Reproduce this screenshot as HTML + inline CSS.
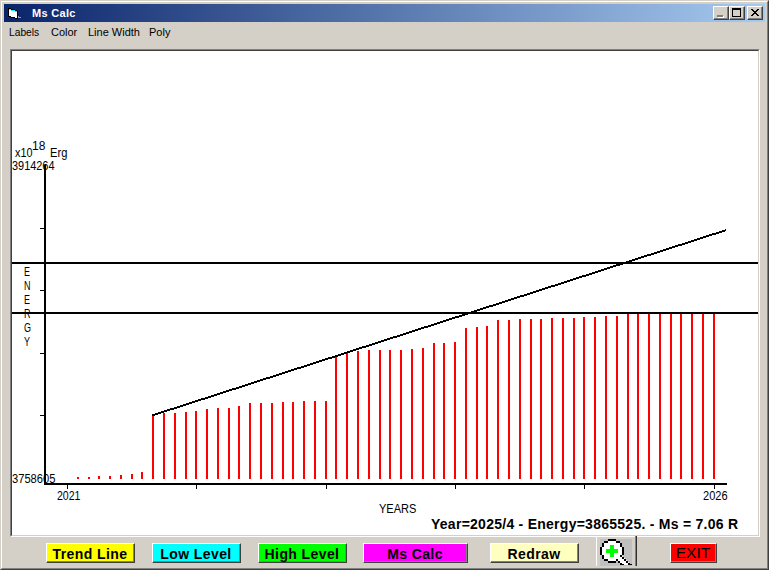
<!DOCTYPE html>
<html><head><meta charset="utf-8">
<style>
*{margin:0;padding:0;box-sizing:border-box}
html,body{width:769px;height:570px;overflow:hidden;background:#d4d0c8}
body{position:relative;font-family:"Liberation Sans",sans-serif;}
.a{position:absolute}
.t{position:absolute;white-space:nowrap;line-height:1;transform-origin:0 0}
.btn{position:absolute;border-top:1px solid #fff;border-left:1px solid #fff;border-right:1px solid #404040;border-bottom:1px solid #404040;}
.btn i{position:absolute;left:0;top:0;right:0;bottom:0;border-right:1px solid #808080;border-bottom:1px solid #808080;}
.btn b{position:absolute;left:-1px;right:0;text-align:center;font-weight:bold;font-size:14px;letter-spacing:0.4px;color:#000;white-space:nowrap}
.tb{position:absolute;top:6px;width:16px;height:14px;background:#d4d0c8;border-top:1px solid #fff;border-left:1px solid #fff;border-right:1px solid #404040;border-bottom:1px solid #404040;}
.tb i{position:absolute;left:0;top:0;right:0;bottom:0;border-right:1px solid #808080;border-bottom:1px solid #808080;}
</style></head><body>
<!-- window frame -->
<div class="a" style="left:0;top:0;width:769px;height:570px;border-top:1px solid #d4d0c8;border-left:1px solid #d4d0c8;border-right:1px solid #404040;border-bottom:1px solid #404040"></div>
<div class="a" style="left:1px;top:1px;width:767px;height:568px;border-top:1px solid #fff;border-left:1px solid #fff;border-right:1px solid #808080;border-bottom:1px solid #808080"></div>
<!-- title bar -->
<div class="a" style="left:4px;top:4px;width:761px;height:18px;background:linear-gradient(to right,#0a246a,#a6caf0)"></div>
<svg class="a" style="left:0;top:0" width="24" height="22" shape-rendering="crispEdges">
<path fill="#000" d="M8 8h3v1h-3zM8 9h1v8h-1zM11 9h4v1h-4zM15 10h2v1h-2zM17 11h1v8h-1zM8 16h3v1h-3zM11 17h4v1h-4zM15 18h2v1h-2z"/>
<path fill="#0ff" d="M9 9h2v1h-2zM11 10h4v1h-4zM15 11h2v1h-2z"/>
<path fill="#fff" d="M9 10h2v6h-2zM11 11h4v6h-4zM15 12h2v6h-2z"/>
<path fill="#9a9ab0" d="M18 16h1v2h-1zM19 17h2v1h-2z"/>
</svg>
<div class="t" id="t_title" style="left:32px;top:8px;letter-spacing:0.3px;font-size:11px;font-weight:bold;color:#fff">Ms Calc</div>
<div class="tb" style="left:713px"><i></i>
 <div class="a" style="left:3px;top:8px;width:6px;height:2px;background:#808080;box-shadow:1px 1px 0 #fff"></div></div>
<div class="tb" style="left:729px"><i></i>
 <div class="a" style="left:2px;top:1px;width:9px;height:9px;border:1px solid #000;border-top-width:2px"></div></div>
<div class="tb" style="left:747px"><i></i>
 <svg class="a" style="left:3px;top:2px" width="8" height="7" viewBox="0 0 8 7" shape-rendering="crispEdges">
 <path d="M0 0h2v1h-2zM6 0h2v1h-2zM1 1h2v1h-2zM5 1h2v1h-2zM2 2h4v1h-4zM3 3h2v1h-2zM2 4h4v1h-4zM1 5h2v1h-2zM5 5h2v1h-2zM0 6h2v1h-2zM6 6h2v1h-2z" fill="#000"/></svg></div>
<!-- menu -->
<div class="t" id="t_m1" style="left:9px;top:27px;transform:scaleX(0.93);font-size:11px;color:#000">Labels</div>
<div class="t" id="t_m2" style="left:51px;top:27px;font-size:11px;color:#000">Color</div>
<div class="t" id="t_m3" style="left:88px;top:27px;font-size:11px;color:#000">Line Width</div>
<div class="t" id="t_m4" style="left:149px;top:27px;font-size:11px;color:#000">Poly</div>
<!-- chart frame -->
<div class="a" style="left:10px;top:49px;width:750px;height:488px;border-top:1px solid #808080;border-left:1px solid #808080;border-right:1px solid #fff;border-bottom:1px solid #fff"></div>
<div class="a" style="left:11px;top:50px;width:748px;height:486px;border-top:1px solid #404040;border-left:1px solid #404040;border-right:1px solid #d4d0c8;border-bottom:1px solid #d4d0c8;background:#fff"></div>
<svg class="a" style="left:0;top:0" width="769" height="570" shape-rendering="crispEdges">
<g fill="#f00">
<rect x="77" y="477" width="2" height="2"/>
<rect x="88" y="477" width="2" height="2"/>
<rect x="98" y="476" width="2" height="3"/>
<rect x="109" y="476" width="2" height="3"/>
<rect x="120" y="475" width="2" height="4"/>
<rect x="131" y="474" width="2" height="5"/>
<rect x="141" y="472" width="2" height="7"/>
<rect x="152" y="414" width="2" height="65"/>
<rect x="163" y="413" width="2" height="66"/>
<rect x="174" y="413" width="2" height="66"/>
<rect x="185" y="412" width="2" height="67"/>
<rect x="195" y="411" width="2" height="68"/>
<rect x="206" y="409" width="2" height="70"/>
<rect x="217" y="408" width="2" height="71"/>
<rect x="228" y="408" width="2" height="71"/>
<rect x="238" y="406" width="2" height="73"/>
<rect x="249" y="403" width="2" height="76"/>
<rect x="260" y="403" width="2" height="76"/>
<rect x="271" y="403" width="2" height="76"/>
<rect x="282" y="402" width="2" height="77"/>
<rect x="292" y="402" width="2" height="77"/>
<rect x="303" y="401" width="2" height="78"/>
<rect x="314" y="401" width="2" height="78"/>
<rect x="325" y="401" width="2" height="78"/>
<rect x="335" y="356" width="2" height="123"/>
<rect x="346" y="353" width="2" height="126"/>
<rect x="357" y="351" width="2" height="128"/>
<rect x="368" y="350" width="2" height="129"/>
<rect x="379" y="350" width="2" height="129"/>
<rect x="389" y="350" width="2" height="129"/>
<rect x="400" y="350" width="2" height="129"/>
<rect x="411" y="349" width="2" height="130"/>
<rect x="422" y="348" width="2" height="131"/>
<rect x="433" y="343" width="2" height="136"/>
<rect x="443" y="343" width="2" height="136"/>
<rect x="454" y="342" width="2" height="137"/>
<rect x="465" y="328" width="2" height="151"/>
<rect x="476" y="327" width="2" height="152"/>
<rect x="486" y="326" width="2" height="153"/>
<rect x="497" y="320" width="2" height="159"/>
<rect x="508" y="320" width="2" height="159"/>
<rect x="519" y="319" width="2" height="160"/>
<rect x="530" y="319" width="2" height="160"/>
<rect x="540" y="319" width="2" height="160"/>
<rect x="551" y="318" width="2" height="161"/>
<rect x="562" y="318" width="2" height="161"/>
<rect x="573" y="318" width="2" height="161"/>
<rect x="583" y="317" width="2" height="162"/>
<rect x="594" y="317" width="2" height="162"/>
<rect x="605" y="316" width="2" height="163"/>
<rect x="616" y="316" width="2" height="163"/>
<rect x="627" y="314" width="2" height="165"/>
<rect x="637" y="314" width="2" height="165"/>
<rect x="648" y="314" width="2" height="165"/>
<rect x="659" y="314" width="2" height="165"/>
<rect x="670" y="314" width="2" height="165"/>
<rect x="680" y="314" width="2" height="165"/>
<rect x="691" y="314" width="2" height="165"/>
<rect x="702" y="314" width="2" height="165"/>
<rect x="713" y="314" width="2" height="165"/>
</g>
<g fill="#000">
<rect x="44" y="165" width="2" height="320"/>
<rect x="44" y="483" width="683" height="2"/>
<rect x="12" y="262" width="746" height="2"/>
<rect x="12" y="312" width="746" height="2"/>
<rect x="40" y="228" width="4" height="1"/><rect x="40" y="290" width="4" height="1"/><rect x="40" y="353" width="4" height="1"/><rect x="40" y="415" width="4" height="1"/>
<rect x="67" y="485" width="1" height="4"/><rect x="196" y="485" width="1" height="4"/><rect x="326" y="485" width="1" height="4"/><rect x="455" y="485" width="1" height="4"/><rect x="584" y="485" width="1" height="4"/><rect x="714" y="485" width="1" height="4"/>
</g>
<path fill="#000" d="M152 414h3v2h-3zM155 413h3v2h-3zM158 412h3v2h-3zM161 411h3v2h-3zM164 410h3v2h-3zM167 409h3v2h-3zM170 408h4v2h-4zM174 407h3v2h-3zM177 406h3v2h-3zM180 405h3v2h-3zM183 404h3v2h-3zM186 403h3v2h-3zM189 402h3v2h-3zM192 401h3v2h-3zM195 400h3v2h-3zM198 399h3v2h-3zM201 398h4v2h-4zM205 397h3v2h-3zM208 396h3v2h-3zM211 395h3v2h-3zM214 394h3v2h-3zM217 393h3v2h-3zM220 392h3v2h-3zM223 391h3v2h-3zM226 390h3v2h-3zM229 389h3v2h-3zM232 388h4v2h-4zM236 387h3v2h-3zM239 386h3v2h-3zM242 385h3v2h-3zM245 384h3v2h-3zM248 383h3v2h-3zM251 382h3v2h-3zM254 381h3v2h-3zM257 380h3v2h-3zM260 379h3v2h-3zM263 378h3v2h-3zM266 377h4v2h-4zM270 376h3v2h-3zM273 375h3v2h-3zM276 374h3v2h-3zM279 373h3v2h-3zM282 372h3v2h-3zM285 371h3v2h-3zM288 370h3v2h-3zM291 369h3v2h-3zM294 368h3v2h-3zM297 367h4v2h-4zM301 366h3v2h-3zM304 365h3v2h-3zM307 364h3v2h-3zM310 363h3v2h-3zM313 362h3v2h-3zM316 361h3v2h-3zM319 360h3v2h-3zM322 359h3v2h-3zM325 358h3v2h-3zM328 357h4v2h-4zM332 356h3v2h-3zM335 355h3v2h-3zM338 354h3v2h-3zM341 353h3v2h-3zM344 352h3v2h-3zM347 351h3v2h-3zM350 350h3v2h-3zM353 349h3v2h-3zM356 348h3v2h-3zM359 347h3v2h-3zM362 346h4v2h-4zM366 345h3v2h-3zM369 344h3v2h-3zM372 343h3v2h-3zM375 342h3v2h-3zM378 341h3v2h-3zM381 340h3v2h-3zM384 339h3v2h-3zM387 338h3v2h-3zM390 337h3v2h-3zM393 336h4v2h-4zM397 335h3v2h-3zM400 334h3v2h-3zM403 333h3v2h-3zM406 332h3v2h-3zM409 331h3v2h-3zM412 330h3v2h-3zM415 329h3v2h-3zM418 328h3v2h-3zM421 327h3v2h-3zM424 326h4v2h-4zM428 325h3v2h-3zM431 324h3v2h-3zM434 323h3v2h-3zM437 322h3v2h-3zM440 321h3v2h-3zM443 320h3v2h-3zM446 319h3v2h-3zM449 318h3v2h-3zM452 317h3v2h-3zM455 316h4v2h-4zM459 315h3v2h-3zM462 314h3v2h-3zM465 313h3v2h-3zM468 312h3v2h-3zM471 311h3v2h-3zM474 310h3v2h-3zM477 309h3v2h-3zM480 308h3v2h-3zM483 307h3v2h-3zM486 306h3v2h-3zM489 305h4v2h-4zM493 304h3v2h-3zM496 303h3v2h-3zM499 302h3v2h-3zM502 301h3v2h-3zM505 300h3v2h-3zM508 299h3v2h-3zM511 298h3v2h-3zM514 297h3v2h-3zM517 296h3v2h-3zM520 295h4v2h-4zM524 294h3v2h-3zM527 293h3v2h-3zM530 292h3v2h-3zM533 291h3v2h-3zM536 290h3v2h-3zM539 289h3v2h-3zM542 288h3v2h-3zM545 287h3v2h-3zM548 286h3v2h-3zM551 285h4v2h-4zM555 284h3v2h-3zM558 283h3v2h-3zM561 282h3v2h-3zM564 281h3v2h-3zM567 280h3v2h-3zM570 279h3v2h-3zM573 278h3v2h-3zM576 277h3v2h-3zM579 276h3v2h-3zM582 275h4v2h-4zM586 274h3v2h-3zM589 273h3v2h-3zM592 272h3v2h-3zM595 271h3v2h-3zM598 270h3v2h-3zM601 269h3v2h-3zM604 268h3v2h-3zM607 267h3v2h-3zM610 266h3v2h-3zM613 265h3v2h-3zM616 264h4v2h-4zM620 263h3v2h-3zM623 262h3v2h-3zM626 261h3v2h-3zM629 260h3v2h-3zM632 259h3v2h-3zM635 258h3v2h-3zM638 257h3v2h-3zM641 256h3v2h-3zM644 255h3v2h-3zM647 254h4v2h-4zM651 253h3v2h-3zM654 252h3v2h-3zM657 251h3v2h-3zM660 250h3v2h-3zM663 249h3v2h-3zM666 248h3v2h-3zM669 247h3v2h-3zM672 246h3v2h-3zM675 245h3v2h-3zM678 244h4v2h-4zM682 243h3v2h-3zM685 242h3v2h-3zM688 241h3v2h-3zM691 240h3v2h-3zM694 239h3v2h-3zM697 238h3v2h-3zM700 237h3v2h-3zM703 236h3v2h-3zM706 235h3v2h-3zM709 234h3v2h-3zM712 233h4v2h-4zM716 232h3v2h-3zM719 231h3v2h-3zM722 230h3v2h-3zM725 229h1v2h-1z"/>
</svg>
<!-- labels -->
<div class="t" id="t_x10" style="left:15px;top:147px;transform:scaleX(0.9);font-size:12px">x10</div>
<div class="t" id="t_18" style="left:32px;top:140px;font-size:12px">18</div>
<div class="t" id="t_erg" style="left:50px;top:147px;transform:scaleX(0.93);font-size:12px">Erg</div>
<div class="t" id="t_ymax" style="left:12px;top:160px;transform:scaleX(0.91);font-size:12px">3914264</div>
<div class="t" id="t_ymin" style="left:12px;top:473px;transform:scaleX(0.93);font-size:12px">3758605</div>
<div class="t" id="t_2021" style="left:57px;top:490px;transform:scaleX(0.88);font-size:12px">2021</div>
<div class="t" id="t_2026" style="left:703px;top:490px;transform:scaleX(0.92);font-size:12px">2026</div>
<div class="t" id="t_years" style="left:379px;top:503px;transform:scaleX(0.92);font-size:12px">YEARS</div>
<div class="t" id="t_energy" style="left:24px;top:265px;transform:scaleX(0.75);font-size:12px;width:8px;text-align:center;line-height:14px">E<br>N<br>E<br>R<br>G<br>Y</div>
<div class="t" id="t_info" style="left:431px;top:517px;letter-spacing:0.26px;font-size:14px;font-weight:bold">Year=2025/4 - Energy=3865525. - Ms = 7.06 R</div>
<!-- buttons -->
<div class="btn" style="left:46px;top:543px;width:89px;height:20px;background:#ff0"><i></i><b class="t" id="t_b1" style="top:3px">Trend Line</b></div>
<div class="btn" style="left:152px;top:543px;width:89px;height:20px;background:#0ff"><i></i><b class="t" id="t_b2" style="top:3px">Low Level</b></div>
<div class="btn" style="left:258px;top:543px;width:89px;height:20px;background:#0f0"><i></i><b class="t" id="t_b3" style="top:3px">High Level</b></div>
<div class="btn" style="left:363px;top:543px;width:105px;height:20px;background:#f0f"><i></i><b class="t" id="t_b4" style="top:3px">Ms Calc</b></div>
<div class="btn" style="left:490px;top:543px;width:89px;height:20px;background:#ffffc0"><i></i><b class="t" id="t_b5" style="top:3px">Redraw</b></div>
<div class="btn" style="left:670px;top:543px;width:47px;height:20px;background:#f00"><i></i><b class="t" id="t_b6" style="top:1px;font-weight:normal;font-size:15.5px;letter-spacing:0px">EXIT</b></div>
<!-- zoom button -->
<div class="a" style="left:596px;top:536px;width:1px;height:30px;background:#fff"></div>
<div class="a" style="left:635px;top:536px;width:1px;height:30px;background:#808080"></div><div class="a" style="left:636px;top:536px;width:1px;height:30px;background:#303030"></div>
<div class="a" style="left:600px;top:539px;width:32px;height:27px;background:#c0c0c0"></div>
<svg class="a" style="left:0;top:0" width="769" height="570" shape-rendering="crispEdges">
<path fill="#fff" d="M604 543h16v18h-16zM602 547h20v8h-20zM608 541h8v20h-8zM616 560l5-5l11 10h-8z"/>
<path fill="#000" d="M608 539h8v2h-8zM604 541h4v2h-4zM616 541h4v2h-4zM602 543h2v4h-2zM620 543h2v4h-2zM600 547h2v8h-2zM622 547h2v8h-2zM602 555h2v4h-2zM604 559h4v2h-4zM608 561h8v2h-8zM616 559h2v2h-2z
M620 555h2v2h-2zM622 557h2v2h-2zM624 559h2v2h-2zM626 561h2v2h-2zM628 563h2v2h-2zM630 564h2v1h-2zM618 561h2v2h-2zM620 563h2v2h-2zM622 564h2v1h-2z"/>
<path fill="#0f0" d="M606 549h12v4h-12zM610 545h4v12h-4z"/>
</svg>
</body></html>
